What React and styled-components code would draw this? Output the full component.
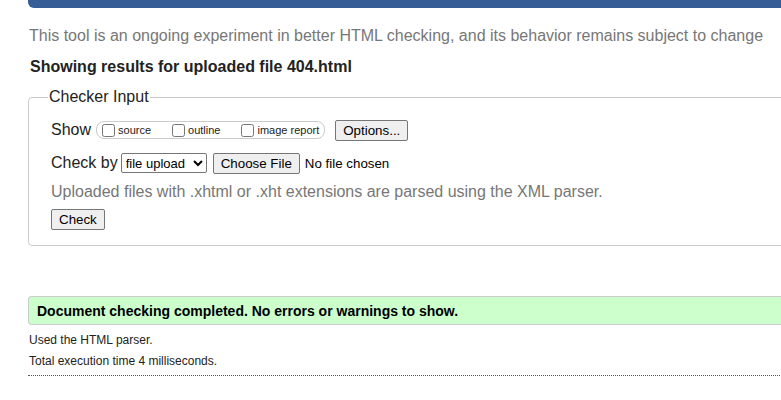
import React from 'react'
import styled, { createGlobalStyle } from 'styled-components'

function App () {
    return (
        <Page>
            <GlobalStyle />
            <TopBar />
            <Intro>This tool is an ongoing experiment in better HTML checking, and its behavior remains subject to change</Intro>
            <H2>Showing results for uploaded file 404.html</H2>
            <Fieldset>
                <Legend>Checker Input</Legend>
                <Row>
                    <span>Show</span>
                    <Group>
                        <Option><Box type="checkbox" />source</Option>
                        <Option><Box type="checkbox" />outline</Option>
                        <Option last><Box type="checkbox" />image report</Option>
                    </Group>
                    <Button space={10}>Options...</Button>
                </Row>
                <Row>
                    <span>Check by</span>
                    <Select defaultValue="file">
                        <option value="file">file upload</option>
                    </Select>
                    <Button space={6}>Choose File</Button>
                    <NoFile>No file chosen</NoFile>
                </Row>
                <Hint>Uploaded files with .xhtml or .xht extensions are parsed using the XML parser.</Hint>
                <Button>Check</Button>
            </Fieldset>
            <Success>Document checking completed. No errors or warnings to show.</Success>
            <Details first>Used the HTML parser.</Details>
            <Details>Total execution time 4 milliseconds.</Details>
            <Rule />
        </Page>
    )
}

export default App

const GlobalStyle = createGlobalStyle`
html, body {
    margin: 0;
    overflow: hidden;
    background: #fff;
}
body {
    font-family: "Liberation Sans", Arial, sans-serif;
    color: #222;
}
`
const Page = styled.div`
width: 1000px;
padding-left: 28px;
`
const TopBar = styled.div`
height: 8px;
background: #365d95;
border-bottom-left-radius: 6px;
`
const Intro = styled.p`
margin: 18px 0 0 1px;
font-size: 16px;
line-height: 20px;
color: #777;
`
const H2 = styled.h2`
margin: 11px 0 0 2px;
font-size: 16px;
line-height: 20px;
color: #222;
`
const Fieldset = styled.fieldset`
margin: 11px 0 0 0;
padding: 14px 22px 15px 22px;
border: 1px solid #ccc;
border-radius: 4px;
`
const Legend = styled.legend`
padding: 0 1px;
margin-left: -3px;
font-size: 16px;
color: #222;
`
const Row = styled.div`
display: flex;
align-items: center;
font-size: 16px;
margin-bottom: 13px;
height: 20px;
`
const Group = styled.span`
display: inline-flex;
align-items: center;
height: 16px;
margin-left: 5px;
padding: 0 5px 0 1px;
border: 1px solid #ccc;
border-radius: 8px;
font-size: 11px;
`
const Option = styled.label`
display: inline-flex;
align-items: center;
margin-right: ${p => (p.last ? '0' : '17px')};
`
const Box = styled.input`
width: 13px;
height: 13px;
margin: 0 3px 0 4px;
`
const Button = styled.button`
font-family: "Liberation Sans", Arial, sans-serif;
font-size: 13.33px;
height: 21px;
padding: 1px 7px;
margin-left: ${p => p.space || 0}px;
background: #efefef;
border: 1px solid #767676;
border-radius: 2px;
color: #000;
`
const Select = styled.select`
font-family: "Liberation Sans", Arial, sans-serif;
font-size: 13px;
height: 20px;
width: 86px;
margin-left: 3px;
color: #000;
border: 1px solid #767676;
border-radius: 2px;
background: #fff;
`
const NoFile = styled.span`
font-size: 13.33px;
margin-left: 5px;
color: #000;
`
const Hint = styled.p`
margin: -3px 0 8px 0;
font-size: 16px;
color: #777;
`
const Success = styled.p`
margin: 50px 0 0 0;
padding: 6px 8px;
height: 15px;
background: #ccffcc;
border: 1px solid #ccc;
border-right: none;
border-radius: 4px 0 0 4px;
font-size: 14px;
font-weight: bold;
line-height: 16px;
color: #000;
`
const Details = styled.p`
margin: ${p => (p.first ? '8px' : '6px')} 0 0 1px;
font-size: 12px;
line-height: 15px;
color: #222;
`
const Rule = styled.hr`
margin: 6px 0 0 0;
border: none;
border-top: 1px dotted #555;
`
